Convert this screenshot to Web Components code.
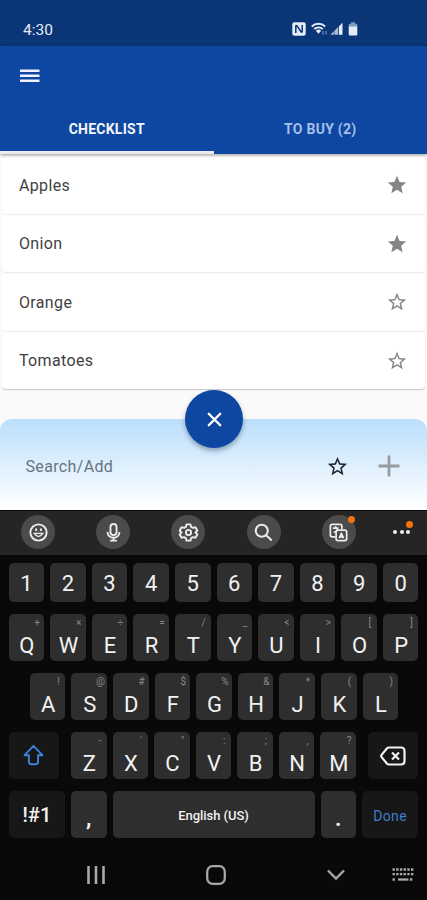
<!DOCTYPE html>
<html lang="en">
<head>
<meta charset="utf-8">
<title>Checklist</title>
<style>
    body {
        margin: 0;
        font-family: Roboto, "Liberation Sans", sans-serif;
    }
</style>
</head>
<body>
<shopping-app></shopping-app>
<script>
const ICONS = {
    menu: { box: "0 0 20 14", body: `<path fill="currentColor" d="M0 .5h19.500v2.500H0zM0 5.500h19.500V8H0zM0 10.500h19.500V13H0z"/>` },
    nfc: { box: "0 0 14 14", body: `<rect x=".3" y=".3" width="13.400" height="13.400" rx="2" fill="currentColor"/><path d="M3.800 11V4.300q0-1.600 1.200-.4l4 5.800q1.200 1.200 1.200-.4V3" fill="none" stroke="#0a3576" stroke-width="1.500"/>` },
    wifi: { box: "0 0 17 14", body: `<path d="M.8 4.500a9.500 9.500 0 0 1 13.400 0M3.200 7.200a6 6 0 0 1 8.600 0" fill="none" stroke="currentColor" stroke-width="1.900"/><path fill="currentColor" d="M4.800 8.800a3.800 3.800 0 0 1 5.400 0L7.500 11.800z"/><path d="M12 12.500v-3.500M15 9v3.500" stroke="currentColor" stroke-width="1.200" opacity=".5"/>` },
    signal: { box: "0 0 13 14", body: `<path fill="currentColor" opacity=".75" d="M.3 12.800L8.400 4.800v8z"/><path fill="currentColor" d="M8.800 4.600L12.500 .8v12H8.800z"/><path d="M4.300 8v5M8.400 4v9" stroke="#0a3576" stroke-width=".6"/>` },
    battery: { box: "0 0 10 14", body: `<path fill="currentColor" opacity=".55" d="M3 .3h4v1.500h1.500q.8 0 .8.800V5H.7V2.600q0-.8.800-.8H3z"/><path fill="currentColor" d="M.7 4.500h8.600v8q0 1-1 1H1.700q-1 0-1-1z"/>` },
    star: { box: "0 0 24 24", body: `<path fill="currentColor" d="M12 17.270 18.180 21l-1.640-7.030L22 9.240l-7.190-.61L12 2 9.190 8.630 2 9.240l5.460 4.730L5.820 21z"/>` },
    starBorder: { box: "0 0 24 24", body: `<path fill="currentColor" d="m22 9.240-7.190-.62L12 2 9.190 8.630 2 9.240l5.460 4.730L5.820 21 12 17.270 18.180 21l-1.630-7.030zM12 15.400l-3.760 2.270 1-4.280-3.320-2.880 4.380-.38L12 6.100l1.710 4.040 4.380.38-3.320 2.880 1 4.280z"/>` },
    close: { box: "0 0 16 16", body: `<path d="m1.200 1.200 13.600 13.600m0-13.600L1.200 14.800" stroke="currentColor" stroke-width="2.300"/>` },
    plus: { box: "0 0 22 22", body: `<path d="M11 .5v21M.5 11h21" stroke="currentColor" stroke-width="2.800"/>` },
    smile: { box: "0 0 24 24", body: `<g fill="none" stroke="currentColor" stroke-width="2"><circle cx="12" cy="12" r="8.500"/><path d="M7.600 12.900q4.400 6.600 8.800 0z" stroke-width="1.500"/><path d="M9.500 7.700v2.800M14.500 7.700v2.800"/></g>` },
    mic: { box: "0 0 24 24", body: `<g fill="none" stroke="currentColor" stroke-width="2"><rect x="8.800" y="3.200" width="6.400" height="11.600" rx="3.200"/><path d="M5.800 11.500c0 8 12.400 8 12.400 0M12 17.500v3M8.500 20.500h7"/></g>` },
    gear: { box: "0 0 24 24", body: `<g fill="none" stroke="currentColor" stroke-width="2" stroke-linejoin="round"><path d="M10 3.500h4l.8 2.700 1.700 1 2.700-.7 2 3.500-1.900 2 1.900 2-2 3.500-2.700-.7-1.700 1-.8 2.700h-4l-.8-2.700-1.700-1-2.700.7-2-3.500 1.900-2-1.900-2 2-3.500 2.700.7 1.700-1z"/><circle cx="12" cy="12" r="2.700"/></g>` },
    search: { box: "0 0 24 24", body: `<g fill="none" stroke="currentColor" stroke-width="2.100"><circle cx="10.200" cy="10.200" r="6.300"/><path d="m14.800 14.800 5.800 5.500"/></g>` },
    translate: { box: "0 0 24 24", body: `<g fill="none" stroke="currentColor" stroke-width="1.800" stroke-linejoin="round"><path d="M8.800 16.500H5.500q-2 0-2-2v-9q0-2 2-2h8q2 0 2 2v3"/><rect x="9.500" y="9.500" width="11" height="11" rx="2"/><path d="M6 7.500h6M9 5.500v2M7 12q4-1 4-4.500M12.800 17.800 15 12.800l2.200 5M13.500 16.500h3"/></g>` },
    shift: { box: "0 0 22 24", body: `<path d="M11 2 1.700 11.700h4.500v6.500q0 3 3 3h3.600q3 0 3-3v-6.500h4.500z" fill="none" stroke="currentColor" stroke-width="2" stroke-linejoin="round"/>` },
    backspace: { box: "0 0 26 20", body: `<path d="M9 1.500h12q3.500 0 3.500 3.500v10q0 3.500-3.500 3.500H9q-1.200 0-2-.8L1.800 11.400q-1.200-1.400 0-2.800L7 2.300q.8-.8 2-.8z" fill="none" stroke="currentColor" stroke-width="2.200"/><path d="m12 6.500 7 7m0-7-7 7" stroke="currentColor" stroke-width="2.200"/>` },
    recents: { box: "0 0 18 18", body: `<path d="M1.500 0v18M9 0v18M16.500 0v18" stroke="currentColor" stroke-width="2.600"/>` },
    home: { box: "0 0 20 20", body: `<rect x="1.200" y="1.200" width="17.600" height="17.600" rx="5.500" fill="none" stroke="currentColor" stroke-width="2.300"/>` },
    down: { box: "0 0 18 12", body: `<path d="m1 1.500 8 8 8-8" fill="none" stroke="currentColor" stroke-width="2.300"/>` },
    keyboard: { box: "0 0 22 14", body: `<path d="M.5 1.500h21M.5 6.200h21M.5 11.500h3.600M17.900 11.500h3.600" stroke="currentColor" stroke-width="2.300" stroke-dasharray="2.400 1.300"/><path d="M6 11.500h10.500" stroke="currentColor" stroke-width="2.300"/>` }
};

class AppIcon extends HTMLElement {
    constructor() {
        super();
        this.attachShadow({ mode: "open" });
    }

    connectedCallback() {
        const icon = ICONS[this.getAttribute("name")];
        this.shadowRoot.innerHTML = `
            <style>
                :host { display: block; flex: none; }
                svg { display: block; width: 100%; height: 100%; }
            </style>
            <svg viewBox="${icon.box}">${icon.body}</svg>
        `;
    }
}

class StatusBar extends HTMLElement {
    constructor() {
        super();
        this.attachShadow({ mode: "open" });
        this.shadowRoot.innerHTML = `
            <style>
                :host {
                    display: flex;
                    align-items: center;
                    justify-content: space-between;
                    box-sizing: border-box;
                    height: 46px;
                    padding: 12px 69px 0 23px;
                    background: #0a3576;
                    color: #e4ecf8;
                    font-size: 15.500px;
                }
                span { padding-top: 1px; }
                div { display: flex; gap: 5px; }
                app-icon { height: 14px; }
            </style>
            <span>4:30</span>
            <div>
                <app-icon name="nfc" style="width: 14px"></app-icon>
                <app-icon name="wifi" style="width: 17px"></app-icon>
                <app-icon name="signal" style="width: 13px; margin-left: -3px"></app-icon>
                <app-icon name="battery" style="width: 10px"></app-icon>
            </div>
        `;
    }
}

class AppBar extends HTMLElement {
    constructor() {
        super();
        this.attachShadow({ mode: "open" });
        this.shadowRoot.innerHTML = `
            <style>
                :host {
                    display: flex;
                    flex-direction: column;
                    position: relative;
                    height: 108px;
                    background: #0d47a1;
                    box-shadow: 0 1px 3px rgba(0, 0, 0, .4);
                }
                .toolbar {
                    display: flex;
                    align-items: center;
                    height: 60px;
                    padding-left: 20px;
                    color: #f0f2ff;
                }
                .toolbar app-icon { width: 20px; height: 14px; }
                nav { display: flex; flex: 1; }
            </style>
            <div class="toolbar"><app-icon name="menu"></app-icon></div>
            <nav><slot></slot></nav>
        `;
    }
}

class AppTab extends HTMLElement {
    constructor() {
        super();
        this.attachShadow({ mode: "open" });
        this.shadowRoot.innerHTML = `
            <style>
                :host {
                    display: flex;
                    flex: 1;
                    align-items: center;
                    justify-content: center;
                    box-sizing: border-box;
                    border-bottom: 3px solid transparent;
                    font-size: 14px;
                    font-weight: 700;
                    letter-spacing: .25px;
                    color: #a5bfe8;
                }
                :host([active]) {
                    color: #f3f6fc;
                    border-color: #e9edf2;
                }
            </style>
            <slot></slot>
        `;
    }
}

class ListItem extends HTMLElement {
    constructor() {
        super();
        this.attachShadow({ mode: "open" });
    }

    connectedCallback() {
        const icon = this.hasAttribute("starred") ? "star" : "starBorder";
        this.shadowRoot.innerHTML = `
            <style>
                :host {
                    display: flex;
                    align-items: center;
                    justify-content: space-between;
                    box-sizing: border-box;
                    height: 57px;
                    padding: 0 17.500px 0 17px;
                    border-radius: 4px;
                    background: #fff;
                    box-shadow: 0 1px 1px rgba(0, 0, 0, .06);
                    color: #3f3f3f;
                    font-size: 16px;
                    letter-spacing: .35px;
                }
                :host(:last-child) { box-shadow: 0 1px 1px rgba(0, 0, 0, .2); }
                app-icon { width: 22px; height: 22px; color: #858585; }
            </style>
            <slot></slot>
            <app-icon name="${icon}"></app-icon>
        `;
    }
}

class AddPanel extends HTMLElement {
    constructor() {
        super();
        this.attachShadow({ mode: "open" });
        this.shadowRoot.innerHTML = `
            <style>
                :host {
                    display: flex;
                    align-items: center;
                    position: relative;
                    box-sizing: border-box;
                    height: 91px;
                    padding: 3px 27.500px 0 25.500px;
                    border-radius: 12px 12px 0 0;
                    background: linear-gradient(#bbdefb, #fcfeff 95%);
                }
                .hint {
                    flex: 1;
                    color: #68747e;
                    font-size: 16px;
                    letter-spacing: .35px;
                }
                .star { width: 23px; height: 23px; margin-right: 28.500px; color: #1c2127; }
                .plus { width: 22px; height: 22px; color: #999c9f; }
                /* floating button sits across the top edge */
                button {
                    display: flex;
                    align-items: center;
                    justify-content: center;
                    position: absolute;
                    top: -29px;
                    left: 185px;
                    width: 58px;
                    height: 58px;
                    padding: 0;
                    border: 0;
                    border-radius: 50%;
                    background: #0d47a1;
                    color: #fff;
                    box-shadow: 0 3px 5px rgba(0, 30, 60, .35);
                }
                button app-icon { width: 15px; height: 15px; }
            </style>
            <span class="hint">Search/Add</span>
            <app-icon class="star" name="starBorder"></app-icon>
            <app-icon class="plus" name="plus"></app-icon>
            <button><app-icon name="close"></app-icon></button>
        `;
    }
}

class KeyTool extends HTMLElement {
    constructor() {
        super();
        this.attachShadow({ mode: "open" });
    }

    connectedCallback() {
        const name = this.getAttribute("name");
        this.shadowRoot.innerHTML = `
            <style>
                :host {
                    display: flex;
                    align-items: center;
                    justify-content: center;
                    position: relative;
                    width: 34px;
                    height: 34px;
                    border-radius: 50%;
                    background: #4b4b4b;
                    color: #ececec;
                }
                :host([plain]) { background: none; }
                app-icon { width: 23px; height: 23px; }
                .dots { display: flex; gap: 2.500px; }
                .dots i { width: 4px; height: 4px; border-radius: 50%; background: #ececec; }
                .badge {
                    position: absolute;
                    top: 1px;
                    right: 1px;
                    width: 7px;
                    height: 7px;
                    border-radius: 50%;
                    background: #f5730f;
                }
                :host([plain]) .badge { top: 6px; right: 6px; }
            </style>
            ${name ? `<app-icon name="${name}"></app-icon>` : `<div class="dots"><i></i><i></i><i></i></div>`}
            ${this.hasAttribute("badge") ? `<div class="badge"></div>` : ""}
        `;
    }
}

class KeyCap extends HTMLElement {
    constructor() {
        super();
        this.attachShadow({ mode: "open" });
    }

    connectedCallback() {
        this.shadowRoot.innerHTML = `
            <style>
                :host {
                    display: flex;
                    align-items: center;
                    justify-content: center;
                    position: relative;
                    flex: none;
                    box-sizing: border-box;
                    width: 35.600px;
                    height: 47px;
                    border-radius: 5px;
                    background: #2e2e2e;
                    color: #f2f2f2;
                    font-size: 22px;
                }
                :host([kind="digit"]) { height: 39px; padding-top: 2px; }
                :host([kind="letter"]) { padding: 15px 0 0 1px; }
                :host([kind="action"]) { background: #171717; }
                .hint {
                    position: absolute;
                    top: 3px;
                    right: 3px;
                    width: 8px;
                    text-align: center;
                    color: #888;
                    font-size: 10px;
                    line-height: 12px;
                }
            </style>
            <slot></slot><span class="hint"></span>
        `;
        this.shadowRoot.querySelector(".hint").textContent = this.getAttribute("hint") || "";
    }
}

class SoftKeyboard extends HTMLElement {
    constructor() {
        super();
        this.attachShadow({ mode: "open" });
        this.shadowRoot.innerHTML = `
            <style>
                :host {
                    display: flex;
                    flex-direction: column;
                    height: 390px;
                    background: #090909;
                }
                .tools {
                    display: flex;
                    align-items: center;
                    justify-content: space-between;
                    box-sizing: border-box;
                    height: 45px;
                    padding: 0 8px 2px 21px;
                    border-top: 1px solid #080808;
                    background: #252525;
                }
                .rows {
                    display: flex;
                    flex-direction: column;
                    align-items: center;
                    gap: 12.100px;
                    padding-top: 8px;
                }
                .row { display: flex; gap: 6px; }
                #home { padding-left: 1px; }
                .shift { width: 50px; margin-right: 6px; color: #3b83df; }
                .shift app-icon { width: 21px; height: 23px; }
                .back { width: 50px; margin-left: 6px; }
                .back app-icon { width: 26px; height: 20px; }
                .symbols { width: 56px; font-size: 20px; font-weight: 500; padding-top: 1px; }
                .space { width: 202px; padding-top: 2px; font-size: 13px; font-weight: 500; letter-spacing: -.05px; }
                .mark { padding-top: 7px; font-weight: 700; }
                .done { width: 56px; padding-top: 2px; color: #3f7dcb; font-size: 14px; letter-spacing: .3px; }
                .nav {
                    display: flex;
                    align-items: center;
                    justify-content: space-between;
                    box-sizing: border-box;
                    padding: 27px 13px 0 87px;
                    color: #a8a8a8;
                }
            </style>
            <div class="tools">
                <key-tool name="smile"></key-tool>
                <key-tool name="mic"></key-tool>
                <key-tool name="gear"></key-tool>
                <key-tool name="search"></key-tool>
                <key-tool name="translate" badge></key-tool>
                <key-tool plain badge style="margin-left: -12px"></key-tool>
            </div>
            <div class="rows">
                <div class="row" id="digits"></div>
                <div class="row" id="top"></div>
                <div class="row" id="home"></div>
                <div class="row" id="bottom">
                    <key-cap class="shift" kind="action"><app-icon name="shift"></app-icon></key-cap>
                    <key-cap class="back" kind="action"><app-icon name="backspace"></app-icon></key-cap>
                </div>
                <div class="row">
                    <key-cap class="symbols" kind="action">!#1</key-cap>
                    <key-cap class="mark">,</key-cap>
                    <key-cap class="space">English (US)</key-cap>
                    <key-cap class="mark">.</key-cap>
                    <key-cap class="done" kind="action">Done</key-cap>
                </div>
            </div>
            <div class="nav">
                <app-icon name="recents" style="width: 18px; height: 18px"></app-icon>
                <app-icon name="home" style="width: 20px; height: 20px"></app-icon>
                <app-icon name="down" style="width: 18px; height: 12px"></app-icon>
                <app-icon name="keyboard" style="width: 22px; height: 14px; margin-left: -54px"></app-icon>
            </div>
        `;
        this.addKeys("digits", "1234567890", "", "digit");
        this.addKeys("top", "QWERTYUIOP", "+×÷=/_<>[]", "letter");
        this.addKeys("home", "ASDFGHJKL", "!@#$%&*()", "letter");
        this.addKeys("bottom", "ZXCVBNM", "-'\":;,?", "letter");
    }

    addKeys(id, letters, hints, kind) {
        const row = this.shadowRoot.getElementById(id);
        const last = row.querySelector(".back");
        [...letters].forEach((letter, i) => {
            const key = document.createElement("key-cap");
            key.setAttribute("kind", kind);
            if (hints) {
                key.setAttribute("hint", hints[i]);
            }
            key.textContent = letter;
            row.insertBefore(key, last);
        });
    }
}

class ShoppingApp extends HTMLElement {
    constructor() {
        super();
        this.attachShadow({ mode: "open" });
        this.shadowRoot.innerHTML = `
            <style>
                :host {
                    display: flex;
                    flex-direction: column;
                    width: 427px;
                    height: 900px;
                    overflow: hidden;
                    background: #fafafa;
                }
                app-bar { z-index: 1; }
                main {
                    display: flex;
                    flex-direction: column;
                    flex: 1;
                    gap: 1.500px;
                    padding: 2.500px 2px 0;
                }
            </style>
            <status-bar></status-bar>
            <app-bar>
                <app-tab active>CHECKLIST</app-tab>
                <app-tab>TO BUY (2)</app-tab>
            </app-bar>
            <main>
                <list-item starred>Apples</list-item>
                <list-item starred>Onion</list-item>
                <list-item>Orange</list-item>
                <list-item>Tomatoes</list-item>
            </main>
            <add-panel></add-panel>
            <soft-keyboard></soft-keyboard>
        `;
    }
}

customElements.define("app-icon", AppIcon);
customElements.define("status-bar", StatusBar);
customElements.define("app-bar", AppBar);
customElements.define("app-tab", AppTab);
customElements.define("list-item", ListItem);
customElements.define("add-panel", AddPanel);
customElements.define("key-tool", KeyTool);
customElements.define("key-cap", KeyCap);
customElements.define("soft-keyboard", SoftKeyboard);
customElements.define("shopping-app", ShoppingApp);
</script>
</body>
</html>
